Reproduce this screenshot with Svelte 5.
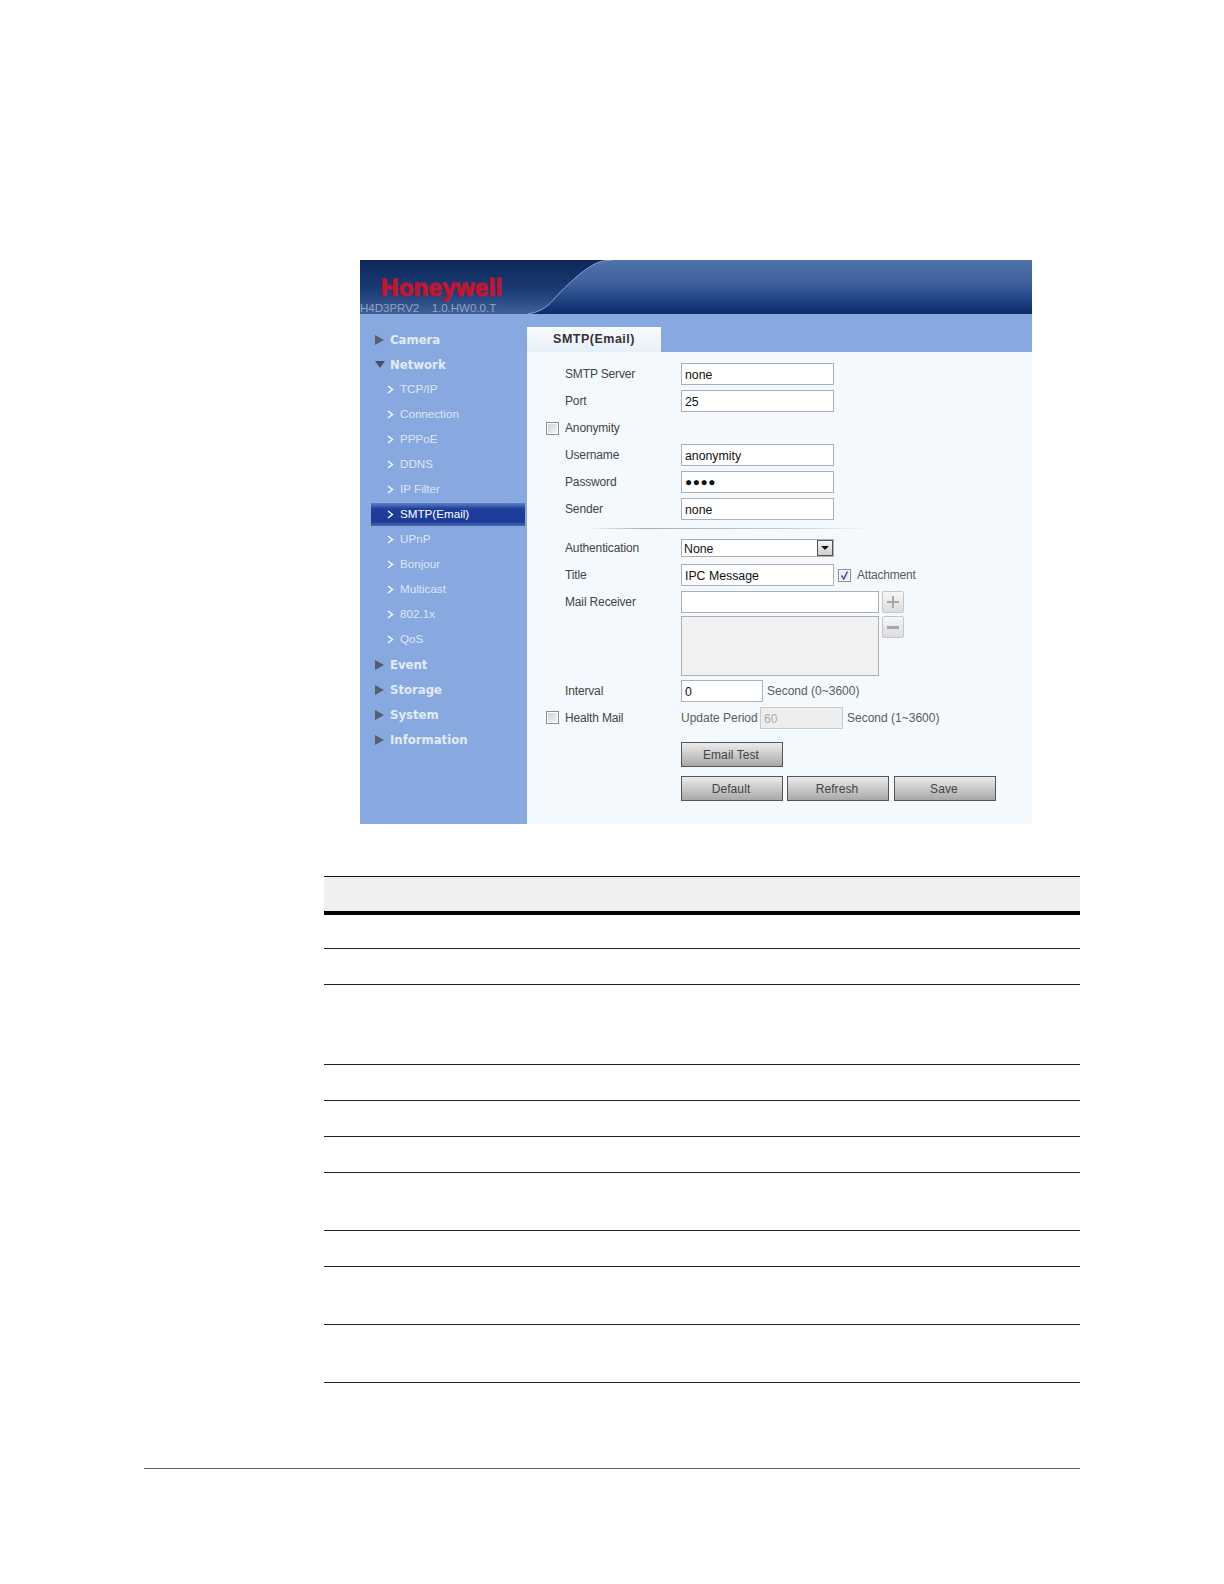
<script>
  const subItems = ["TCP/IP", "Connection", "PPPoE", "DDNS", "IP Filter", "SMTP(Email)", "UPnP", "Bonjour", "Multicast", "802.1x", "QoS"];
  const after = ["Event", "Storage", "System", "Information"];
  const tableRows = [34, 36, 80, 36, 36, 36, 58, 36, 58, 58];
</script>

<div class="page">
  <div class="panel">
    <header class="banner">
      <svg class="swoosh" viewBox="0 0 672 54" aria-hidden="true">
        <defs>
          <linearGradient id="sky" x1="0" y1="0" x2="0" y2="1">
            <stop offset="0" stop-color="#4f70aa" />
            <stop offset="0.4" stop-color="#40639f" />
            <stop offset="0.75" stop-color="#1f4282" />
            <stop offset="1" stop-color="#0a2a68" />
          </linearGradient>
        </defs>
        <path d="M168 54 C182 52 190 44 195 38 S216 16 228 8 S244 1 252 0 L672 0 L672 54 Z" fill="url(#sky)" />
        <path d="M168 54 C182 52 190 44 195 38 S216 16 228 8 S244 1 252 0" fill="none" stroke="#8ba6cf" stroke-width="1" />
      </svg>
      <span class="logo">Honeywell</span>
      <span class="version">H4D3PRV2&nbsp; 1.0.HW0.0.T</span>
    </header>

    <div class="body">
      <nav class="side">
        <div class="top"><span class="tri"></span>Camera</div>
        <div class="top"><span class="tri down"></span>Network</div>
        {#each subItems as item}
          <div class="sub" class:active={item === "SMTP(Email)"}>
            <svg class="chev" viewBox="0 0 7 9" aria-hidden="true"><path d="M1 1 L5.5 4.5 L1 8" fill="none" stroke="currentColor" stroke-width="1.3" /></svg>
            {item}
          </div>
        {/each}
        {#each after as item}
          <div class="top"><span class="tri"></span>{item}</div>
        {/each}
      </nav>

      <main class="content">
        <div class="tabs"><div class="tab">SMTP(Email)</div></div>
        <div class="form">
          <div class="row"><span class="label">SMTP Server</span><div class="field">none</div></div>
          <div class="row"><span class="label">Port</span><div class="field">25</div></div>
          <div class="row"><span class="check"></span><span class="label">Anonymity</span></div>
          <div class="row"><span class="label">Username</span><div class="field">anonymity</div></div>
          <div class="row"><span class="label">Password</span><div class="field dots">●●●●</div></div>
          <div class="row"><span class="label">Sender</span><div class="field">none</div></div>
          <div class="divider"></div>
          <div class="row">
            <span class="label">Authentication</span>
            <div class="field select">None<span class="arrow"></span></div>
          </div>
          <div class="row">
            <span class="label">Title</span>
            <div class="field">IPC Message</div>
            <span class="check checked">
              <svg viewBox="0 0 11 11" aria-hidden="true"><path d="M2.5 5.5 L4.8 9 L8.5 1.5" fill="none" stroke="#4a4fa8" stroke-width="1.5" /></svg>
            </span>
            <span class="note attach">Attachment</span>
          </div>
          <div class="receiver">
            <span class="label">Mail Receiver</span>
            <div class="rcv-col">
              <div class="field wide"></div>
              <div class="listbox"></div>
            </div>
            <div class="rcv-btns">
              <span class="sq plus"></span>
              <span class="sq minus"></span>
            </div>
          </div>
          <div class="row">
            <span class="label">Interval</span>
            <div class="field short">0</div>
            <span class="note">Second (0~3600)</span>
          </div>
          <div class="row">
            <span class="check"></span>
            <span class="label">Health Mail</span>
            <span class="period">Update Period</span>
            <div class="field off">60</div>
            <span class="note">Second (1~3600)</span>
          </div>
          <div class="btns first"><button type="button">Email Test</button></div>
          <div class="btns">
            <button type="button">Default</button>
            <button type="button">Refresh</button>
            <button type="button" class="save">Save</button>
          </div>
        </div>
      </main>
    </div>
  </div>

  <section class="table">
    <div class="thead"></div>
    {#each tableRows as h}
      <div class="trow" style="height: {h}px"></div>
    {/each}
  </section>

  <footer class="foot"></footer>
</div>

<style>
  :global(body) {
    margin: 0;
    background: #fff;
  }
  .page {
    width: 1224px;
    height: 1584px;
    padding-top: 260px;
    box-sizing: border-box;
    font-family: "Liberation Sans", Arial, sans-serif;
    overflow: hidden;
  }
  .panel {
    width: 672px;
    height: 564px;
    margin-left: 360px;
    display: flex;
    flex-direction: column;
  }
  .banner {
    position: relative;
    height: 54px;
    flex: none;
    background: linear-gradient(#0d2758, #1d3e78 60%, #3f6299);
    overflow: hidden;
  }
  .swoosh {
    position: absolute;
    inset: 0;
    width: 100%;
    height: 100%;
  }
  .logo {
    position: absolute;
    left: 21px;
    top: 14px;
    font-size: 24px;
    line-height: 28px;
    font-weight: 700;
    letter-spacing: 0.3px;
    color: #c4152f;
    -webkit-text-stroke: 1px #c4152f;
  }
  .version {
    position: absolute;
    left: 0;
    top: 41px;
    font-size: 11.5px;
    line-height: 14px;
    word-spacing: 3px;
    color: #93a3c2;
  }
  .body {
    flex: 1;
    display: flex;
    min-height: 0;
  }
  .side {
    width: 167px;
    flex: none;
    padding-top: 12.5px;
    box-sizing: border-box;
    background: #88a9e0;
  }
  .top {
    height: 25px;
    box-sizing: border-box;
    display: flex;
    align-items: center;
    padding: 1px 0 0 15px;
    font-family: "DejaVu Sans", sans-serif;
    font-size: 11.7px;
    font-weight: 700;
    color: #e3ebf7;
  }
  .tri {
    width: 0;
    height: 0;
    margin-right: 6px;
    border-left: 9px solid #555e6e;
    border-top: 5px solid transparent;
    border-bottom: 5px solid transparent;
  }
  .tri.down {
    margin-right: 5px;
    border-top: 7px solid #464f66;
    border-left: 5px solid transparent;
    border-right: 5px solid transparent;
    border-bottom: 0;
  }
  .sub {
    height: 25px;
    box-sizing: border-box;
    display: flex;
    align-items: center;
    margin: 0 2px 0 11px;
    padding: 0 0 1px 16px;
    border-top: 1px solid transparent;
    border-bottom: 1px solid transparent;
    background-clip: padding-box;
    font-size: 11.65px;
    color: #dde6f4;
  }
  .sub.active {
    background-image: linear-gradient(#5f7fc0, #1f3f9e 25%, #1c3a96 80%, #4a68b4);
    color: #fff;
  }
  .chev {
    width: 7px;
    height: 9px;
    margin: 1px 6px 0 0;
    color: #fff;
  }
  .content {
    flex: 1;
    background: #f3f9fd;
    display: flex;
    flex-direction: column;
  }
  .tabs {
    height: 38px;
    flex: none;
    background: #88a9e0;
    display: flex;
    align-items: flex-end;
  }
  .tab {
    width: 134px;
    height: 25px;
    line-height: 24px;
    text-align: center;
    font-size: 12.5px;
    font-weight: 700;
    letter-spacing: 0.5px;
    color: #333;
    background: linear-gradient(#f9fbfe, #e6eff8);
  }
  .form {
    padding: 8.5px 0 0 19px;
  }
  .row {
    height: 27px;
    display: flex;
    align-items: center;
    position: relative;
    padding-left: 19px;
    font-size: 12px;
    color: #444;
  }
  .label {
    width: 116px;
    flex: none;
    letter-spacing: -0.15px;
  }
  .row > .check:first-child {
    position: absolute;
    left: 0;
    top: 7px;
  }
  .check {
    width: 11px;
    height: 11px;
    flex: none;
    border: 1px solid #8f8f8f;
    background: linear-gradient(135deg, #cfcfcf, #f8f8f8);
    box-shadow: inset 0 0 0 1px #fff;
  }
  .check.checked {
    margin: 0 6px 0 4px;
    background: #e8edf3;
  }
  .check.checked svg {
    display: block;
    width: 11px;
    height: 11px;
  }
  .note {
    margin-left: 4px;
    font-size: 12px;
    color: #5c5c5c;
    white-space: nowrap;
  }
  .note.attach {
    margin-left: 0;
    letter-spacing: -0.2px;
  }
  .period {
    width: 79px;
    flex: none;
    font-size: 12px;
    color: #5c5c5c;
    white-space: nowrap;
  }
  .field {
    width: 151px;
    height: 20px;
    line-height: 22px;
    overflow: hidden;
    border: 1px solid #aab0b6;
    background: #fff;
    font-size: 12.3px;
    color: #111;
    text-indent: 3px;
    flex: none;
  }
  .field.dots {
    font-size: 12px;
    line-height: 20px;
    letter-spacing: 0.5px;
  }
  .field.select {
    position: relative;
    text-indent: 2px;
    height: 16px;
    line-height: 18px;
  }
  .arrow {
    position: absolute;
    right: 0;
    top: 0;
    width: 16px;
    height: 16px;
    box-sizing: border-box;
    border: 1px solid #555;
    background: linear-gradient(#f4f4f4, #cfcfcf);
  }
  .arrow::after {
    content: "";
    position: absolute;
    left: 3px;
    top: 5px;
    border-top: 4px solid #111;
    border-left: 4px solid transparent;
    border-right: 4px solid transparent;
  }
  .field.short {
    width: 80px;
  }
  .field.off {
    width: 81px;
    background: #eeeeee;
    border-color: #c9c9c9;
    color: #aaa;
    font-size: 12px;
  }
  .divider {
    height: 1px;
    width: 286px;
    margin: 5.5px 0 5.5px 41px;
    background: linear-gradient(90deg, #f3f9fd, #a8adb3 20%, #c6cbd0 70%, #f3f9fd);
  }
  .receiver {
    display: flex;
    padding: 2.5px 0 0 19px;
    height: 88.5px;
    box-sizing: border-box;
    font-size: 12px;
    color: #444;
  }
  .receiver .label {
    line-height: 22px;
  }
  .rcv-col {
    display: flex;
    flex-direction: column;
    gap: 3px;
  }
  .field.wide {
    width: 196px;
  }
  .listbox {
    width: 196px;
    height: 58px;
    border: 1px solid #aab0b6;
    background: #f1f1f1;
  }
  .rcv-btns {
    display: flex;
    flex-direction: column;
    gap: 3px;
    margin-left: 3px;
  }
  .sq {
    width: 22px;
    height: 22px;
    box-sizing: border-box;
    border: 1px solid #c3c8cd;
    border-radius: 2px;
    background: linear-gradient(#f7f7f7, #dcdcdc);
    position: relative;
  }
  .sq::after,
  .plus::before {
    content: "";
    position: absolute;
    background: #a8a8a8;
  }
  .sq::after {
    left: 4px;
    right: 4px;
    top: 9px;
    height: 2px;
  }
  .minus::after {
    height: 3px;
  }
  .plus::before {
    top: 4px;
    bottom: 4px;
    left: 9px;
    width: 2px;
  }
  .btns {
    display: flex;
    gap: 4px;
    margin: 9px 0 0 135px;
  }
  .btns.first {
    margin-top: 11px;
  }
  button {
    width: 102px;
    height: 25px;
    padding: 0 2px 0 0;
    box-sizing: border-box;
    border: 1px solid #555;
    border-radius: 0;
    background: linear-gradient(#ececec, #a8a8a8);
    font-family: "Liberation Sans", Arial, sans-serif;
    font-size: 12px;
    letter-spacing: 0.1px;
    color: #444;
  }
  button.save {
    margin-left: 1px;
  }
  .table {
    width: 756px;
    margin: 52px 0 0 324px;
    border-top: 1px solid #111;
  }
  .thead {
    height: 34px;
    background: #f0f0f0;
    border-bottom: 4px solid #000;
  }
  .trow {
    box-sizing: border-box;
    border-bottom: 1px solid #222;
  }
  .foot {
    width: 936px;
    margin: 85px 0 0 144px;
    border-top: 1px solid #666;
  }
</style>
